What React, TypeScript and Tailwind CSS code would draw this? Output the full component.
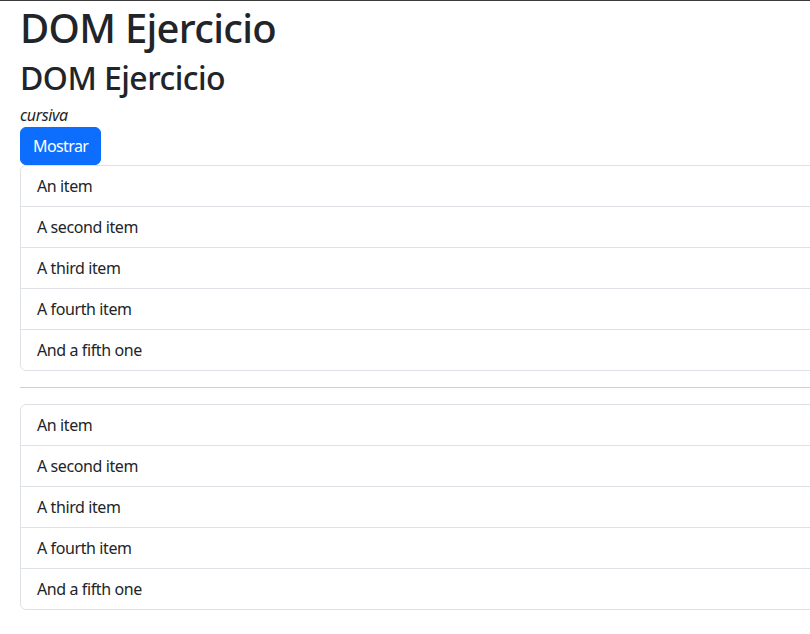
const ITEMS = ["An item", "A second item", "A third item", "A fourth item", "And a fifth one"];

function ItemList() {
  return (
    <ul className="flex flex-col rounded-md border border-[#dee2e6]">
      {ITEMS.map((item, idx) => (
        <li
          key={idx}
          className="px-4 py-2 text-base leading-6 border-[#dee2e6] [&:not(:first-child)]:border-t"
        >
          {item}
        </li>
      ))}
    </ul>
  );
}

export default function App() {
  return (
    <div
      className="min-h-[634px] overflow-hidden border-t border-[#3a3a3a] bg-white tracking-[-0.4px] text-[#212529]"
      style={{ fontFamily: '"Noto Sans", "Open Sans", sans-serif' }}
    >
      <div className="w-[1000px] px-5">
        <h1 className="mb-[5px] pt-[3px] text-[40px] font-medium leading-[48px] tracking-[-0.7px]">DOM Ejercicio</h1>
        <h2 className="mb-[6px] pt-[2px] text-[32px] font-medium leading-[38.4px] tracking-[-0.55px]">DOM Ejercicio</h2>
        <p className="text-base italic leading-6">cursiva</p>
        <button className="rounded-md border border-[#0d6efd] bg-[#0d6efd] px-3 py-1.5 text-base leading-6 tracking-[-0.6px] text-white">
          Mostrar
        </button>
        <ItemList />
        <hr className="my-4 border-t border-[#cfd0d1]" />
        <ItemList />
      </div>
    </div>
  );
}
